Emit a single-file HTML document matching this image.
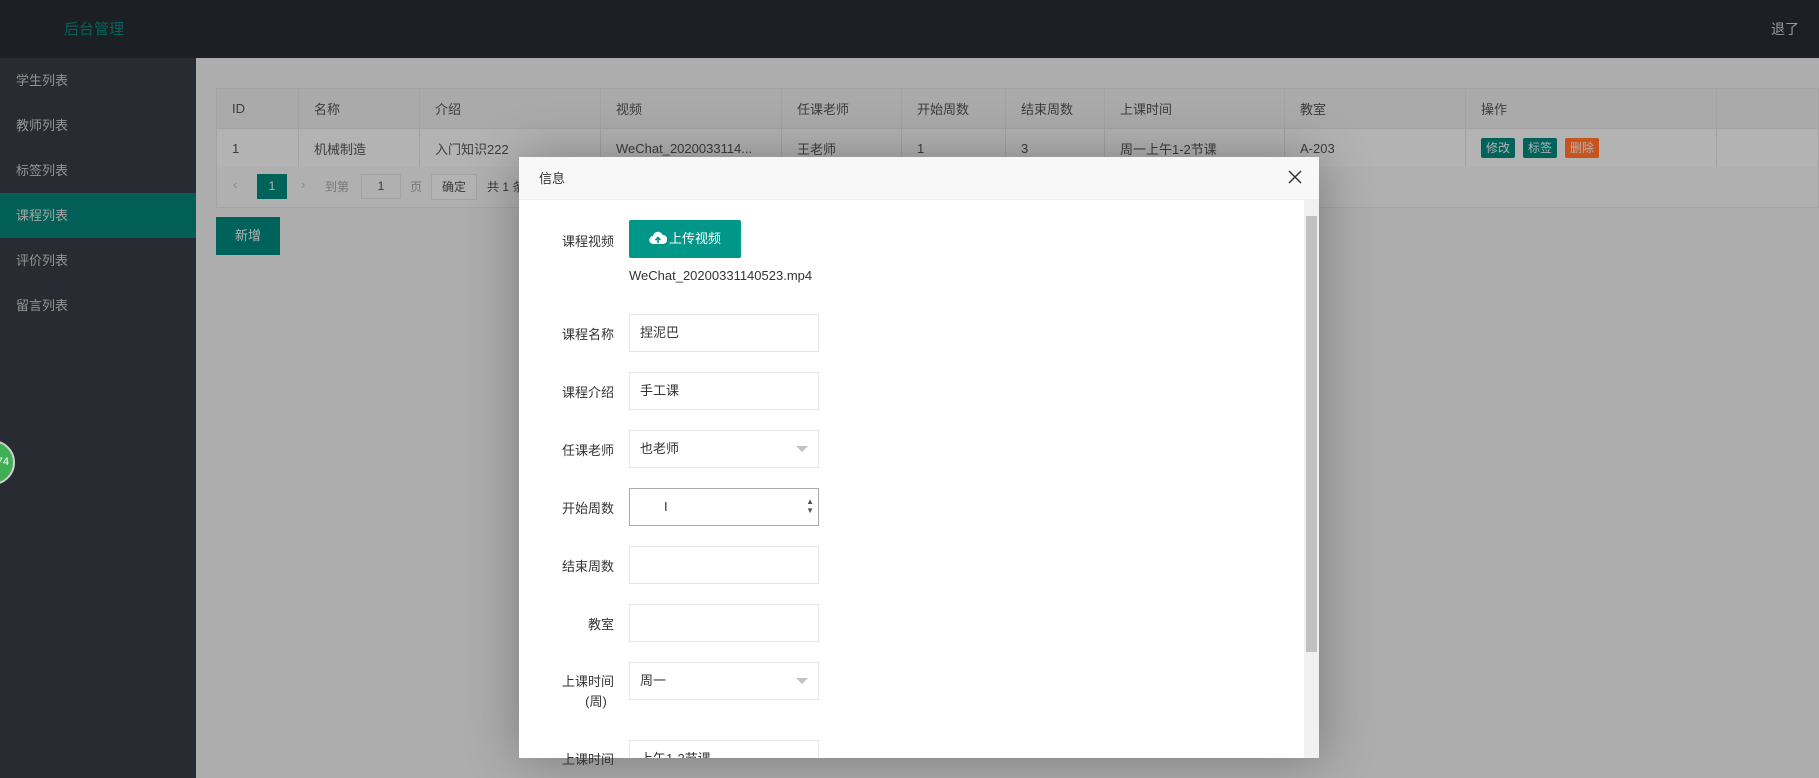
<!DOCTYPE html>
<html><head><meta charset="utf-8"><style>
*{margin:0;padding:0;box-sizing:border-box}
body{width:1819px;height:778px;overflow:hidden;position:relative;background:#adadad;font-family:"Liberation Sans","Noto Sans CJK SC",sans-serif;font-size:13px;color:#3a3a3a}
.hdr{position:absolute;left:0;top:0;width:1819px;height:58px;background:#1c1f24}
.hdr .t{position:absolute;left:64px;top:18px;font-size:15px;color:#00665c}
.hdr .r{position:absolute;right:20px;top:19px;font-size:14px;color:#9a9a9a}
.side{position:absolute;left:0;top:58px;width:196px;height:720px;background:#282b31}
.side div{height:45px;line-height:45px;padding-left:16px;color:#959595;font-size:13px}
.side div.on{background:#005f57;color:#a5a5a5}
table{position:absolute;left:216px;top:88px;width:1603px;border-collapse:collapse;background:#b3b3b3}
td{border:1px solid #a3a3a3;height:39px;padding-left:15px;color:#3c3c3c;font-size:13px}
tr.h td{background:#aaaaaa;height:40px}
.pg{position:absolute;left:216px;top:167px;width:1603px;height:41px;border:1px solid #a3a3a3;border-top:0;background:#b0b0b0}
.b{display:inline-block;color:#b3b3b3;font-size:12px;padding:0 5px;height:20px;line-height:20px;border-radius:2px;margin-right:8px}
.add{position:absolute;left:216px;top:217px;width:64px;height:38px;background:#00635b;color:#b3b3b3;line-height:38px;text-align:center}
.modal{position:absolute;left:519px;top:157px;width:800px;height:601px;background:#fff;box-shadow:1px 1px 50px rgba(0,0,0,.3)}
.mt{height:43px;background:#f8f8f8;border-bottom:1px solid #eee;line-height:43px;padding-left:20px;font-size:13px;color:#333}
.x{position:absolute;right:16px;top:12px}
.sb{position:absolute;right:0;top:43px;width:15px;height:558px;background:#f1f1f1}
.sb i{position:absolute;left:2px;top:16px;width:11px;height:436px;background:#c1c1c1}
.lab{position:absolute;width:95px;text-align:right;color:#333;font-size:13px}
.inp{position:absolute;left:110px;width:190px;height:38px;border:1px solid #e6e6e6;line-height:36px;padding-left:10px;color:#333;font-size:13px}
.arr{position:absolute;right:10px;top:15px;border:6px solid transparent;border-top-color:#c2c2c2;border-bottom:0}
.up{position:absolute;left:110px;top:63px;width:112px;height:38px;background:#009688;color:#fff;line-height:38px;text-align:center;font-size:13px;border-radius:2px}
</style></head><body>
<div class="hdr"><div class="t">后台管理</div><div class="r">退了</div></div>
<div class="side"><div>学生列表</div><div>教师列表</div><div>标签列表</div><div class="on">课程列表</div><div>评价列表</div><div>留言列表</div></div>
<div style="position:absolute;left:-30px;top:440px;width:45px;height:45px;border-radius:50%;background:#3fae55;border:2px solid #d0d0d0;color:#fff;font-size:11px;line-height:41px;text-align:right;padding-right:4px">74</div>
<table>
<tr class="h"><td style="width:82px">ID</td><td style="width:121px">名称</td><td style="width:181px">介绍</td><td style="width:181px">视频</td><td style="width:120px">任课老师</td><td style="width:104px">开始周数</td><td style="width:99px">结束周数</td><td style="width:180px">上课时间</td><td style="width:181px">教室</td><td style="width:251px">操作</td><td></td></tr>
<tr><td>1</td><td>机械制造</td><td>入门知识222</td><td>WeChat_2020033114...</td><td>王老师</td><td>1</td><td>3</td><td>周一上午1-2节课</td><td>A-203</td><td><span class="b" style="background:#00635b">修改</span><span class="b" style="background:#00635b">标签</span><span class="b" style="background:#c8531c">删除</span></td><td></td></tr>
</table>
<div class="pg">
<span style="position:absolute;left:16px;top:10px;color:#888">‹</span>
<span style="position:absolute;left:40px;top:7px;width:30px;height:25px;background:#00635b;color:#b3b3b3;text-align:center;line-height:25px;font-size:12px">1</span>
<span style="position:absolute;left:84px;top:10px;color:#888">›</span>
<span style="position:absolute;left:108px;top:11px;color:#777;font-size:12px">到第</span>
<span style="position:absolute;left:144px;top:7px;width:40px;height:25px;border:1px solid #a3a3a3;text-align:center;line-height:23px;font-size:12px">1</span>
<span style="position:absolute;left:193px;top:11px;color:#777;font-size:12px">页</span>
<span style="position:absolute;left:214px;top:7px;width:46px;height:26px;border:1px solid #a3a3a3;background:#b3b3b3;text-align:center;line-height:24px;font-size:12px">确定</span>
<span style="position:absolute;left:270px;top:11px;font-size:12px">共 1 条</span>
</div>
<div class="add">新增</div>
<div class="modal">
<div class="mt">信息</div>
<svg class="x" width="16" height="16" viewBox="0 0 16 16"><path d="M2 2L14 14M14 2L2 14" stroke="#333" stroke-width="1.5"/></svg>
<div class="sb"><i></i></div>
<div class="lab" style="top:74px">课程视频</div>
<div class="up"><svg width="18" height="14" viewBox="0 0 18 14" style="vertical-align:-2px;margin-right:2px"><path d="M4.5 13A4 4 0 0 1 4 5a5 5 0 0 1 9.6-1A4.5 4.5 0 0 1 14 13Z" fill="#fff"/><path d="M9 12V7M6.5 9L9 6.5 11.5 9" stroke="#009688" stroke-width="1.6" fill="none"/></svg>上传视频</div>
<div style="position:absolute;left:110px;top:111px;font-size:13px;color:#333">WeChat_20200331140523.mp4</div>
<div class="lab" style="top:167px">课程名称</div><div class="inp" style="top:157px">捏泥巴</div>
<div class="lab" style="top:225px">课程介绍</div><div class="inp" style="top:215px">手工课</div>
<div class="lab" style="top:283px">任课老师</div><div class="inp" style="top:273px">也老师<i class="arr"></i></div>
<div class="lab" style="top:341px">开始周数</div><div class="inp" style="top:331px;border-color:#aaa"><span style="position:absolute;right:4px;top:8px;font-size:8px;line-height:9px;color:#555">▲<br>▼</span><span style="position:absolute;left:34px;top:0;color:#333">I</span></div>
<div class="lab" style="top:399px">结束周数</div><div class="inp" style="top:389px"></div>
<div class="lab" style="top:457px">教室</div><div class="inp" style="top:447px"></div>
<div class="lab" style="top:515px;line-height:20px">上课时间<br>(周)&nbsp;&nbsp;</div><div class="inp" style="top:505px">周一<i class="arr"></i></div>
<div class="lab" style="top:592px">上课时间</div><div class="inp" style="top:583px;height:18px;overflow:hidden;border-bottom:0">上午1-2节课</div>
</div>
</body></html>
